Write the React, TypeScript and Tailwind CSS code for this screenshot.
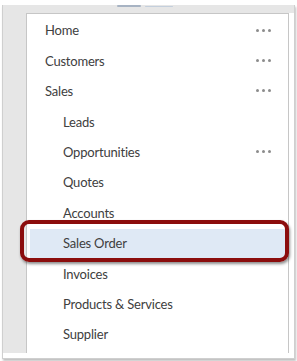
import React from "react";

type Item = { label: string; sub?: boolean; more?: boolean; active?: boolean };

const items: Item[] = [
  { label: "Home", more: true },
  { label: "Customers", more: true },
  { label: "Sales", more: true },
  { label: "Leads", sub: true },
  { label: "Opportunities", sub: true, more: true },
  { label: "Quotes", sub: true },
  { label: "Accounts", sub: true },
  { label: "Sales Order", sub: true, active: true },
  { label: "Invoices", sub: true },
  { label: "Products & Services", sub: true },
  { label: "Supplier", sub: true },
];

function Dots() {
  return (
    <div className="flex items-center gap-[3px] -mt-[2px]">
      <span className="w-[3px] h-[3px] rounded-full bg-[#8c8c8c]" />
      <span className="w-[3px] h-[3px] rounded-full bg-[#8c8c8c]" />
      <span className="w-[3px] h-[3px] rounded-full bg-[#8c8c8c]" />
    </div>
  );
}

export default function App() {
  return (
    <div
      className="relative w-[297px] h-[361px] bg-white overflow-hidden"
      style={{ fontFamily: 'Lato, "Noto Sans", sans-serif' }}
    >
      {/* frame of the screenshot */}
      <div className="ml-[2px] mt-[5px] w-[293px] h-[354px] flex flex-col border-x border-b border-[#cfcfcf] shadow-[1px_2px_2px_rgba(0,0,0,0.25)]">
        <div className="relative h-[8px] bg-[#e6e6e6]">
          <div className="absolute left-[114px] top-0 w-[24px] h-[2px] rounded-full bg-[#7d91ab] opacity-60" />
          <div className="absolute left-[142px] top-[1px] w-[28px] h-[1px] rounded-full bg-[#c4cfdc]" />
        </div>
        <div className="flex flex-1">
          <div className="w-[23px] bg-[#e6e6e6]" />
          <div className="flex-1 bg-white border-l border-t border-r border-[#c6c6c6] pt-[2px]">
            {items.map((it) => {
              const pad = it.active ? "mx-[3px] pl-[33px] pr-[14px] bg-[#dfe9f5]" : it.sub ? "pl-[36px] pr-[17px]" : "pl-[18px] pr-[17px]";
              return (
                <div
                  key={it.label}
                  className={"h-[30.4px] flex items-center justify-between text-[13px] tracking-[-0.2px] text-[#404040] " + pad}
                >
                  <span>{it.label}</span>
                  {it.more && <Dots />}
                </div>
              );
            })}
          </div>
          <div className="w-[5px] bg-white" />
        </div>
        <div className="h-[5px] bg-white" />
      </div>

      {/* highlight annotation */}
      <div className="absolute left-[20px] top-[220px] w-[269px] h-[42px] rounded-[9px] border-4 border-[#8b0d0d] shadow-[1px_2px_3px_rgba(0,0,0,0.45)]" />
    </div>
  );
}
